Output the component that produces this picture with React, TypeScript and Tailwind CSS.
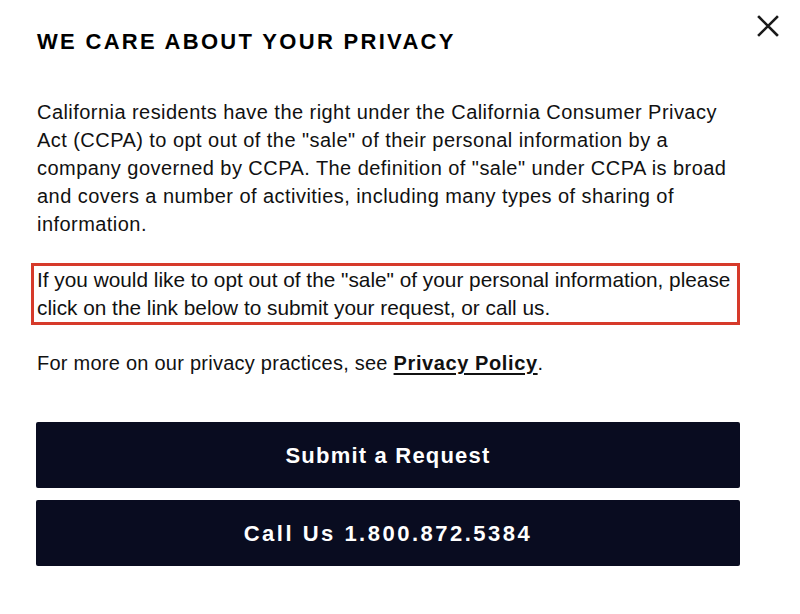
import React from 'react';

const body = "font-['Liberation_Sans',Arial,sans-serif]";

function CloseIcon() {
  return (
    <svg width="22" height="22" viewBox="0 0 22 22" fill="none" stroke="#1a1a1a" strokeWidth="2.6" strokeLinecap="square">
      <path d="M2 2 L20 20 M20 2 L2 20" />
    </svg>
  );
}

export default function App() {
  return (
    <div className={`relative w-[800px] h-[614px] bg-white text-[#111] ${body}`}>
      <button className="absolute left-[757px] top-[15px]" aria-label="Close">
        <CloseIcon />
      </button>

      <div className="pl-[37px] pr-[60px] pt-[31px]">
        <h2 className="text-[22px] leading-[22px] font-black tracking-[2.3px] text-black">
          WE CARE ABOUT YOUR PRIVACY
        </h2>

        <p className="mt-[45px] text-[20px] leading-[28px] tracking-[0.45px]">
          California residents have the right under the California Consumer Privacy Act (CCPA) to opt out of the "sale" of their personal information by a company governed by CCPA. The definition of "sale" under CCPA is broad and covers a number of activities, including many types of sharing of information.
        </p>

        <div className="mt-[25px] -ml-[6px] border-[3px] border-[#d63a2a] pl-[3px] pr-[1px]">
          <p className="text-[20.8px] leading-[28px]">
            If you would like to opt out of the "sale" of your personal information, please click on the link below to submit your request, or call us.
          </p>
        </div>

        <p className="mt-[24px] text-[20px] leading-[28px] tracking-[0.25px]">
          For more on our privacy practices, see{' '}
          <a className="font-bold underline underline-offset-[3px] tracking-[0.6px]">Privacy Policy</a>.
        </p>

        <div className="mt-[45px] flex flex-col gap-[12px] -ml-[1px]">
          <button className="h-[66px] w-full rounded-[2px] bg-[#090c20] text-white text-[22px] font-bold tracking-[1.2px]">
            Submit a Request
          </button>
          <button className="h-[66px] w-full rounded-[2px] bg-[#090c20] text-white text-[22px] font-bold tracking-[2.5px]">
            Call Us 1.800.872.5384
          </button>
        </div>
      </div>
    </div>
  );
}
